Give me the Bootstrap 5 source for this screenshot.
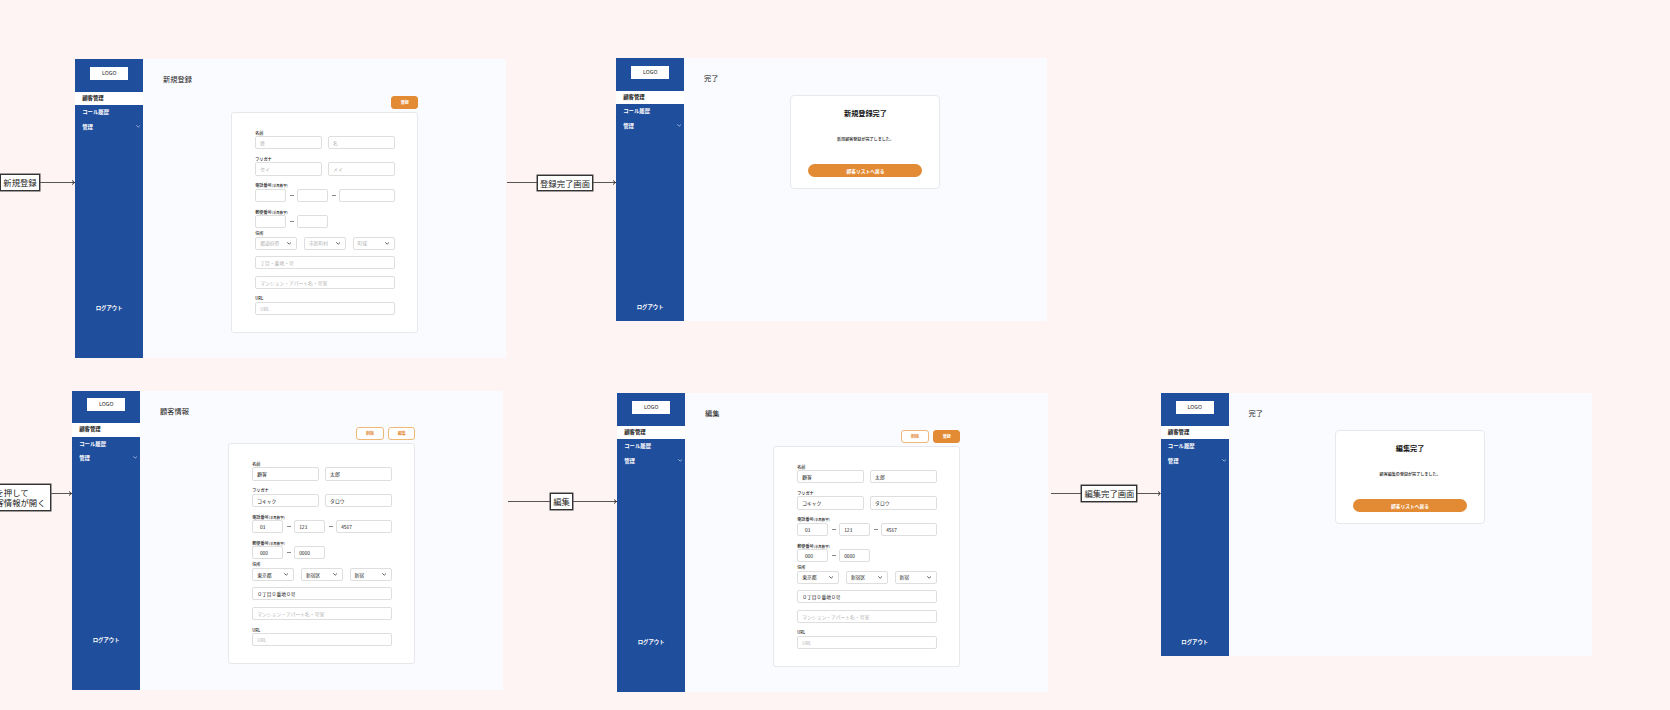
<!DOCTYPE html>
<html lang="ja">
<head>
<meta charset="utf-8">
<meta name="viewport" content="width=device-width, initial-scale=1">
<title>顧客管理 画面遷移図</title>
<link href="https://cdn.jsdelivr.net/npm/bootstrap@5.3.0/dist/css/bootstrap.min.css" rel="stylesheet">
<style>
  :root { --blue: #1f4e9c; --orange: #e38b34; }
  body { background: #fef4f3; font-family: "Noto Sans CJK JP", sans-serif; color: #222; }
  .board { width: 1670px; height: 710px; }
  /* screens and connectors are nodes on a free canvas */
  .screen { width: 431.4px; height: 299px; background: #fafbff; }
  .screen.short { height: 262.6px; }
  .side { width: 68.3px; background: var(--blue); font-size: 5.4px; line-height: 13.6px; font-weight: 700; padding-top: 7.7px; }
  .logo-box { width: 38px; height: 13px; line-height: 12.8px; margin-bottom: 11.8px; font-weight: 400; color: #222; background: #fff; }
  .side .nav-link { padding: 0 3px 0 7.2px; height: 14.2px; color: #fff; line-height: 14.4px; }
  .side .nav-link.active { background: #fff; color: #111; height: 13.6px; line-height: 13.4px; }
  .logout { position: absolute; left: 0; right: 0; top: 243px; }
  .page-title { font-size: 7.25px; line-height: 10px; padding: 15px 0 0 19.6px; height: 36.6px; }
  .form-area { width: 187.3px; margin-left: 87.9px; }
  .acts { gap: 4.5px; height: 15.9px; }
  .btn-xs { width: 27.3px; height: 13px; padding: 0; font-size: 4.1px; line-height: 10.8px; font-weight: 700; border: 1px solid #efb878; border-radius: 3px; color: var(--orange); background: #fff; }
  .btn-xs.fill { background: var(--orange); border-color: var(--orange); color: #fff; }
  .sheet { border: 1px solid #e6e8eb; border-radius: 3px; background: #fff; }
  .sheet.entry { height: 221.3px; padding: 16.9px 22.9px 0 23px; }
  .grp { margin-bottom: 6.7px; }
  .grp.tight { margin-bottom: 2px; }
  .grp.addr { margin-bottom: 6px; }
  .pair { display: grid; grid-template-columns: 1fr 1fr; gap: 6.4px; }
  .trio { display: grid; grid-template-columns: 41.8px 41.8px 42px; gap: 6.9px; }
  .lbl { height: 6.4px; font-size: 4.15px; line-height: 6.2px; font-weight: 500; white-space: nowrap; }
  .lbl span { font-size: 3.4px; }
  .box { height: 13.2px; border: 1px solid #dedede; border-radius: 2px; padding: 0 4px; font-size: 4.8px; line-height: 11.6px; color: #222; background: #fff; white-space: nowrap; }
  .box.ph { color: #b0b0b0; }
  .w-tel { width: 30.7px; }
  .ind { padding-left: 6.7px; }
  .dash { width: 11.3px; display: flex; align-items: center; justify-content: center; }
  .dash::before { content: ""; width: 4px; height: 1px; background: #8a8a8a; }
  .box svg { width: 4.4px; height: 3px; margin-right: .5px; }
  .side svg { width: 4.4px; height: 3px; }
  .dialog { width: 150px; height: 93.6px; margin-left: 106.2px; margin-top: .5px; padding: 11.2px 17px 0; border-radius: 4px; }
  .dialog h2 { font-size: 7.15px; line-height: 11px; font-weight: 700; margin: 0 0 16px; color: #111; }
  .dialog p { font-size: 4.07px; line-height: 8px; margin: 0 0 21px; font-weight: 500; }
  .btn-back { height: 13.4px; padding: 0; border: 0; background: var(--orange); color: #fff; font-size: 4.75px; line-height: 13px; font-weight: 700; }
  .wire { flex: none; height: 1px; background: #555; }
  .tag { border: 1px solid #333; box-shadow: 0 0 0 .5px #444; background: #fff; font-size: 8.35px; line-height: 14.6px; padding: 0 2px; white-space: nowrap; color: #222; }
  .tag.two { line-height: 10.5px; padding: 2px 4px 2px 2px; }
  .tip { width: 4px; height: 5px; flex: none; margin-left: -3.6px; }
</style>
</head>
<body>
<main class="board position-relative overflow-hidden" id="board"></main>

<script src="https://cdn.jsdelivr.net/npm/bootstrap@5.3.0/dist/js/bootstrap.bundle.min.js"></script>
<script>
  const chevron = (color, w) => `<svg viewBox="0 0 5 3" fill="none" stroke="${color}" stroke-width="${w}" stroke-linecap="round"><path d="M.6 .5 2.5 2.3 4.4 .5"/></svg>`;
  const tip = '<svg class="tip" viewBox="0 0 4 5" fill="none" stroke="#222" stroke-width=".9"><path d="M1 .4 3.4 2.5 1 4.6"/></svg>';

  const sidebar = () => `
    <nav class="side position-relative d-flex flex-column flex-shrink-0">
      <div class="logo-box text-center align-self-center flex-shrink-0">LOGO</div>
      <div class="nav flex-column">
        <a class="nav-link active">顧客管理</a>
        <a class="nav-link">コール履歴</a>
        <a class="nav-link d-flex justify-content-between align-items-center">管理${chevron('#dfe8f5', .7)}</a>
      </div>
      <div class="logout text-white text-center">ログアウト</div>
    </nav>`;

  const box = (value, hint, cls = 'flex-fill') =>
    `<div class="box ${cls} ${value ? '' : 'ph'}">${value || hint}</div>`;
  const select = (value, hint) =>
    `<div class="box ${value ? '' : 'ph'} d-flex justify-content-between align-items-center">${value || hint}${chevron('#222', .8)}</div>`;

  const form = (d, buttons) => `
    <div class="form-area">
      <div class="acts d-flex justify-content-end">${buttons}</div>
      <div class="sheet entry">
        <div class="grp"><div class="lbl">名前</div>
          <div class="pair">${box(d[0], '姓')}${box(d[1], '名')}</div></div>
        <div class="grp"><div class="lbl">フリガナ</div>
          <div class="pair">${box(d[2], 'セイ')}${box(d[3], 'メイ')}</div></div>
        <div class="grp"><div class="lbl">電話番号<span>(半角数字)</span></div>
          <div class="d-flex">${box(d[4], '', 'w-tel ind')}<span class="dash"></span>${box(d[5], '', 'w-tel')}<span class="dash"></span>${box(d[6], '')}</div></div>
        <div class="grp tight"><div class="lbl">郵便番号<span>(半角数字)</span></div>
          <div class="d-flex">${box(d[7], '', 'w-tel ind')}<span class="dash"></span>${box(d[8], '', 'w-tel')}</div></div>
        <div class="grp addr"><div class="lbl">住所</div>
          <div class="trio">${select(d[9], '都道府県')}${select(d[10], '市区町村')}${select(d[11], '町域')}</div></div>
        <div class="grp">${box(d[12], '丁目・番地・号')}</div>
        <div class="grp">${box('', 'マンション・アパート名・号室')}</div>
        <div class="grp"><div class="lbl">URL</div>${box('', 'URL')}</div>
      </div>
    </div>`;

  const dialog = (title, text) => `
    <div class="sheet dialog text-center">
      <h2>${title}</h2><p>${text}</p>
      <button class="btn btn-back rounded-pill w-100 d-block">顧客リストへ戻る</button>
    </div>`;

  const screen = (x, y, title, body, short = '') => `
    <section class="screen ${short} position-absolute d-flex" style="left:${x}px;top:${y}px">
      ${sidebar()}
      <div class="flex-fill"><div class="page-title">${title}</div>${body}</div>
    </section>`;

  // before / after = line lengths left and right of the tag
  const connector = (x, y, before, label, after, cls = '') => `
    <div class="d-flex align-items-center position-absolute" style="left:${x}px;top:${y}px">
      <span class="wire" style="width:${before}px"></span><span class="tag ${cls}">${label}</span><span class="wire" style="width:${after}px"></span>${after ? tip : ''}
    </div>`;

  const btn = (t, fill = '') => `<button class="btn btn-xs ${fill}">${t}</button>`;
  const filled = ['顧客', '太郎', 'コキャク', 'タロウ', '03', '123', '4567', '000', '0000', '東京都', '新宿区', '新宿', '０丁目０番地０号'];

  document.getElementById('board').innerHTML =
    screen(75, 59.4, '新規登録', form([], btn('登録', 'fill'))) +
    screen(616, 58.4, '完了', dialog('新規登録完了', '新規顧客登録が完了しました。'), 'short') +
    screen(72, 390.6, '顧客情報', form(filled, btn('削除') + btn('編集'))) +
    screen(617, 393.4, '編集', form(filled, btn('削除') + btn('登録', 'fill'))) +
    screen(1160.6, 393.4, '完了', dialog('編集完了', '顧客編集の登録が完了しました。'), 'short') +
    connector(0.3, 174.2, 0, '新規登録', 35.4) +
    connector(507, 174.6, 30, '登録完了画面', 23) +
    connector(-7.5, 483.6, 0, 'を押して<br>客情報が開く', 0, 'two') +
    `<div class="d-flex align-items-center position-absolute" style="left:50px;top:491px"><span class="wire" style="width:22px"></span>${tip}</div>` +
    connector(507.6, 493.4, 42.6, '編集', 44) +
    connector(1051, 485.2, 30.4, '編集完了画面', 23);
</script>
</body>
</html>
